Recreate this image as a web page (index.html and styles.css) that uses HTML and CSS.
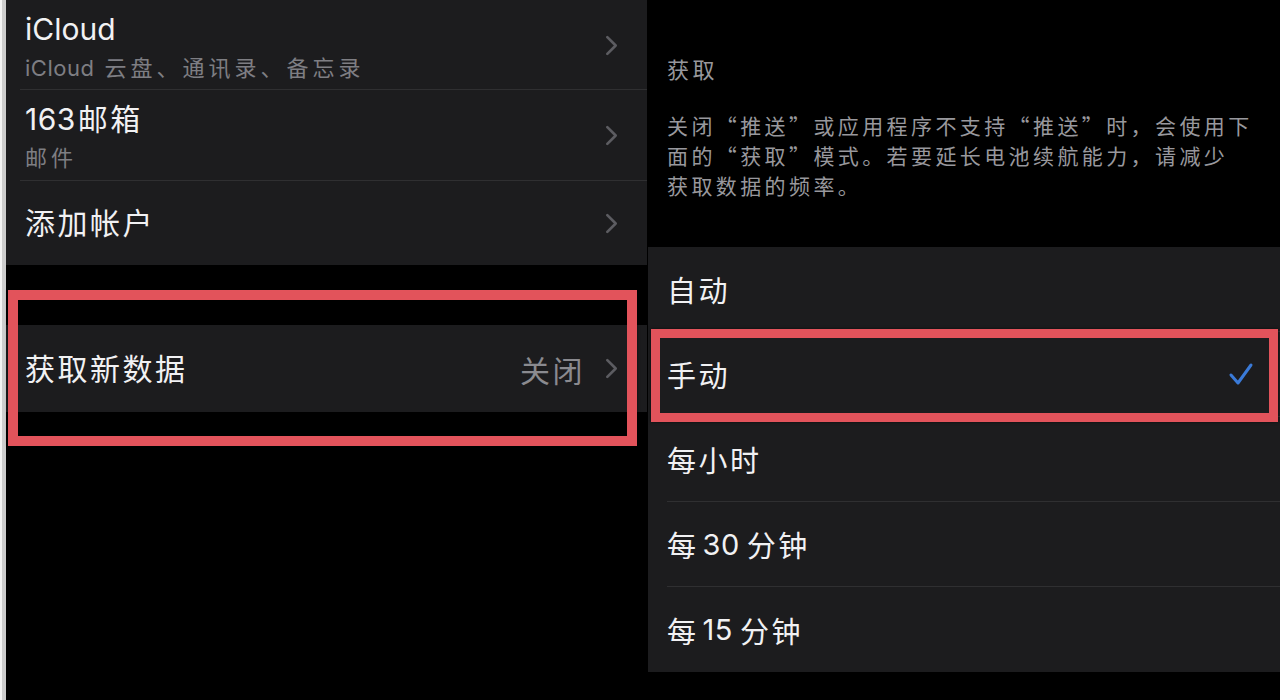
FILE: index.html
```html
<!DOCTYPE html>
<html lang="zh-CN">
<head>
  <meta charset="UTF-8" />
  <meta name="viewport" content="width=device-width, initial-scale=1.0" />
  <title>账户与获取新数据</title>
  <link rel="stylesheet" href="styles.css">
</head>
<body>
  <div class="screen">
    <div class="edge"></div>

    <!-- 左侧：账户列表 -->
    <div class="accounts">
      <div class="group">
        <div class="row row-icloud">
          <div class="row-body">
            <div class="texts">
              <div class="title latin">iCloud</div>
              <div class="subtitle"><span class="latin">iCloud</span> 云盘、通讯录、备忘录</div>
            </div>
            <svg class="chevron" viewBox="0 0 12 20"><path d="M2 2 L10 10 L2 18" /></svg>
          </div>
        </div>
        <div class="row row-mail">
          <div class="row-body">
            <div class="texts">
              <div class="title"><span class="num">163</span>邮箱</div>
              <div class="subtitle">邮件</div>
            </div>
            <svg class="chevron" viewBox="0 0 12 20"><path d="M2 2 L10 10 L2 18" /></svg>
          </div>
        </div>
        <div class="row row-add">
          <div class="row-body last">
            <div class="title">添加帐户</div>
            <svg class="chevron" viewBox="0 0 12 20"><path d="M2 2 L10 10 L2 18" /></svg>
          </div>
        </div>
      </div>

      <div class="group group-fetch">
        <div class="row row-fetch">
          <div class="row-body last">
            <div class="title">获取新数据</div>
            <div class="value">关闭</div>
            <svg class="chevron" viewBox="0 0 12 20"><path d="M2 2 L10 10 L2 18" /></svg>
          </div>
        </div>
        <div class="mark mark-left"></div>
      </div>
    </div>

    <!-- 右侧：获取设置 -->
    <div class="fetch">
      <div class="fetch-head">
        <div class="section-title">获取</div>
        <p class="note">关闭“推送”或应用程序不支持“推送”时，会使用下<br>面的“获取”模式。若要延长电池续航能力，请减少<br>获取数据的频率。</p>
      </div>
      <div class="options">
        <div class="option"><div class="option-body">自动</div></div>
        <div class="option selected">
          <div class="option-body">
            手动
            <svg class="check" viewBox="0 0 26 24"><path d="M3 13 L10 21 L23 3" /></svg>
          </div>
          <div class="mark mark-right"></div>
        </div>
        <div class="option"><div class="option-body">每小时</div></div>
        <div class="option"><div class="option-body">每<span class="num">30</span>分钟</div></div>
        <div class="option"><div class="option-body last">每<span class="num">15</span>分钟</div></div>
      </div>
    </div>
  </div>
</body>
</html>
```

FILE: styles.css
```css
body {
  margin: 0;
  padding: 0;
  background: #000;
  font-family: 'Inter', 'Noto Sans CJK SC', sans-serif;
  color: #f1f1f3;
}

.screen {
  display: flex;
  width: 1280px;
  height: 700px;
  overflow: hidden;
}

.edge {
  width: 4px;
  border-left: 2px solid #f4f4f4;
  background: #cdcdcd;
}

/* 左侧 */

.accounts {
  width: 641px;
}

.group {
  background: #1c1c1e;
}

.group-fetch {
  margin-top: 60px;
  position: relative;
}

.row {
  padding-left: 14px;
}

.row-body {
  display: flex;
  align-items: center;
  height: 100%;
  padding-left: 5px;
  padding-right: 29px;
  border-bottom: 1px solid #2f2f31;
  box-sizing: border-box;
}

.row-body.last {
  border-bottom: none;
}

.row-icloud { height: 90px; }
.row-mail { height: 91px; }
.row-add { height: 84px; }
.row-fetch { height: 87px; }

.row-icloud .row-body,
.row-mail .row-body {
  align-items: flex-start;
  padding-top: 9px;
}

.row-icloud .chevron,
.row-mail .chevron {
  margin-top: 26px;
}

.texts {
  flex: 1;
}

.title {
  flex: 1;
  font-size: 30px;
  line-height: 40px;
  letter-spacing: 2.5px;
}

.latin {
  letter-spacing: 0;
}

.num {
  letter-spacing: 0.5px;
  margin-right: 2px;
}

.option-body .num {
  margin: 0 7px 0 4px;
}

.subtitle {
  font-size: 22px;
  line-height: 38px;
  letter-spacing: 4px;
  color: #7e7e83;
}

.subtitle .latin {
  letter-spacing: 0.5px;
}

.value {
  font-size: 30px;
  letter-spacing: 2.5px;
  color: #8a8a8f;
  margin-right: 20px;
}

.chevron {
  width: 13px;
  height: 21px;
  fill: none;
  stroke: #5c5c61;
  stroke-width: 2.5;
  stroke-linecap: round;
  stroke-linejoin: round;
}

/* 标注框 */

.mark {
  position: absolute;
  border: 10px solid #e2535b;
  box-shadow: 0 0 3px #0009;
  box-sizing: border-box;
  pointer-events: none;
}

.mark-left {
  top: -35px;
  bottom: -34px;
  left: 2px;
  right: 10px;
}

.mark-right {
  top: -3px;
  bottom: -5px;
  left: 3px;
  right: 2px;
  border-width: 9px;
}

/* 右侧 */

.fetch {
  flex: 1;
  margin-left: 1px;
}

.fetch-head {
  height: 247px;
  padding: 53px 19px 0;
  box-sizing: border-box;
  color: #98989d;
}

.section-title {
  font-family: 'Noto Sans CJK SC', sans-serif;
  font-size: 22px;
  line-height: 30px;
  letter-spacing: 3.5px;
}

.note {
  margin: 27px 0 0;
  font-family: 'Noto Sans CJK SC', sans-serif;
  font-size: 21px;
  line-height: 30px;
  letter-spacing: 3.4px;
  white-space: nowrap;
}

.options {
  background: #1c1c1e;
}

.option {
  height: 85px;
  padding-left: 19px;
  position: relative;
}

.option-body {
  display: flex;
  align-items: center;
  height: 100%;
  padding-right: 26px;
  font-size: 29px;
  letter-spacing: 2.5px;
  border-bottom: 1px solid #2f2f31;
  box-sizing: border-box;
}

.option-body.last {
  border-bottom: none;
}

.check {
  margin-left: auto;
  width: 26px;
  height: 24px;
  fill: none;
  stroke: #3a7ad8;
  stroke-width: 3;
  stroke-linecap: round;
  stroke-linejoin: round;
}
```
